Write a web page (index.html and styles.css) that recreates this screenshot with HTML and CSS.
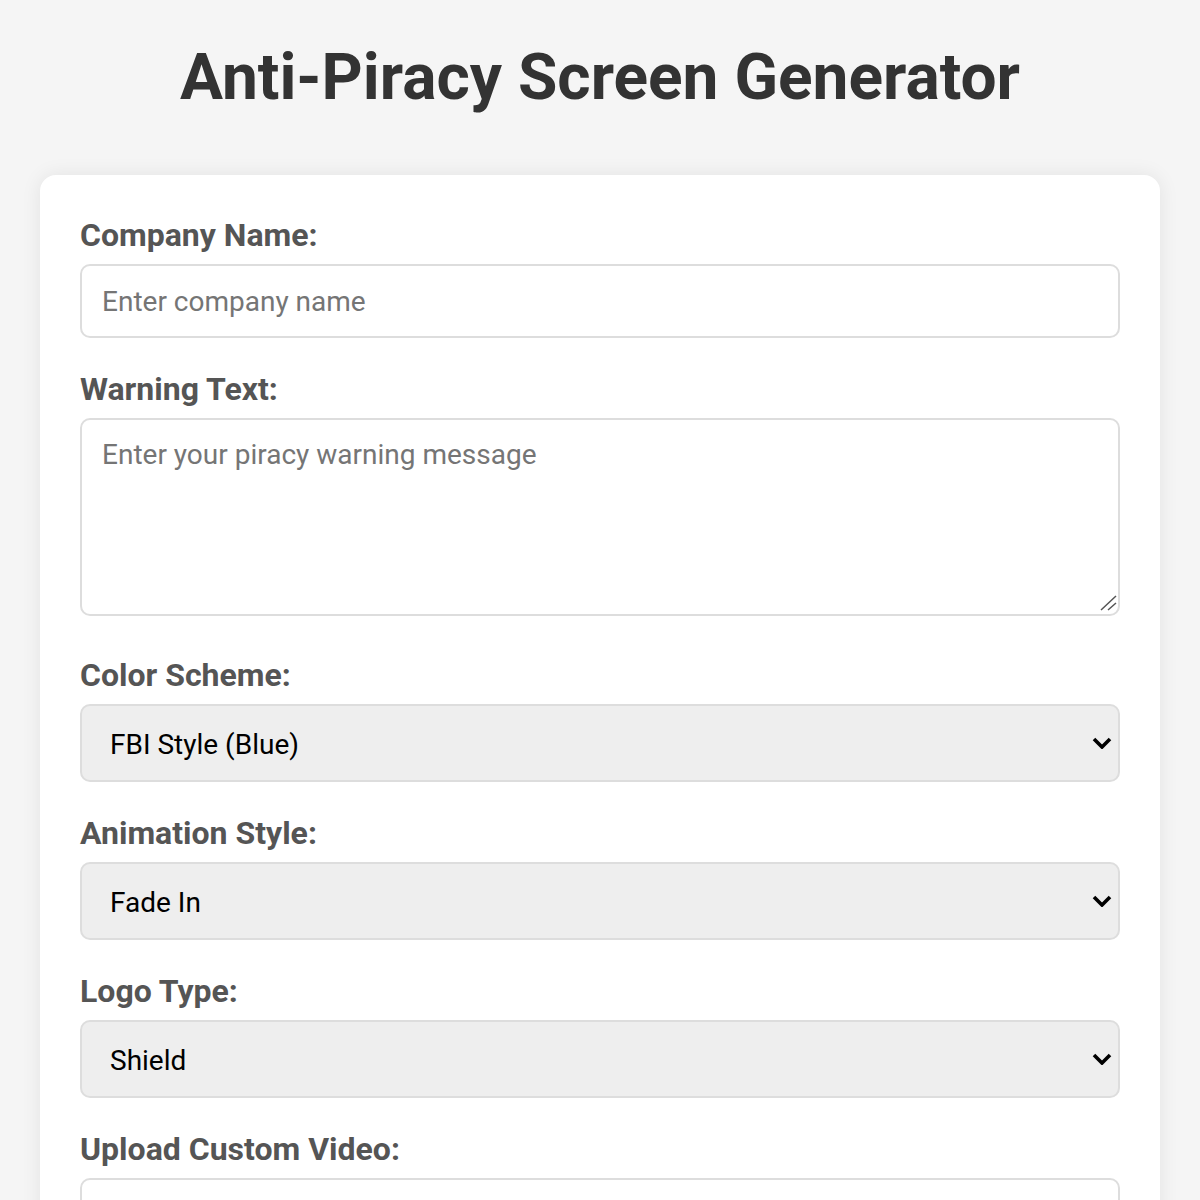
FILE: index.html
```html
<!DOCTYPE html>
<html>
<head>
    <title>Anti-Piracy Screen Generator</title>
    <link rel="stylesheet" href="styles.css">
</head>
<body>
    <h1>Anti-Piracy Screen Generator</h1>

    <div class="container">
        <div class="form-group">
            <label for="companyName">Company Name:</label>
            <input type="text" id="companyName" placeholder="Enter company name">
        </div>

        <div class="form-group form-group-text">
            <label for="warningText">Warning Text:</label>
            <div class="textarea-wrap">
                <textarea id="warningText" placeholder="Enter your piracy warning message"></textarea>
                <svg class="grip" width="20" height="20" viewBox="0 0 20 20"><path d="M3 16 L18 2 M10 16 L18 9" stroke="#555" stroke-width="1.5" fill="none"/></svg>
            </div>
        </div>

        <div class="form-group">
            <label for="colorScheme">Color Scheme:</label>
            <div class="select-wrap">
                <select id="colorScheme">
                    <option>FBI Style (Blue)</option>
                    <option>Interpol (Red)</option>
                    <option>Classic (Black)</option>
                </select>
                <svg class="chevron" width="20" height="12" viewBox="0 0 20 12"><polyline points="2,2 10,10 18,2" fill="none" stroke="#000" stroke-width="3.6"/></svg>
            </div>
        </div>

        <div class="form-group">
            <label for="animationStyle">Animation Style:</label>
            <div class="select-wrap">
                <select id="animationStyle">
                    <option>Fade In</option>
                    <option>Slide Up</option>
                    <option>Flash</option>
                </select>
                <svg class="chevron" width="20" height="12" viewBox="0 0 20 12"><polyline points="2,2 10,10 18,2" fill="none" stroke="#000" stroke-width="3.6"/></svg>
            </div>
        </div>

        <div class="form-group">
            <label for="logoType">Logo Type:</label>
            <div class="select-wrap">
                <select id="logoType">
                    <option>Shield</option>
                    <option>Badge</option>
                    <option>None</option>
                </select>
                <svg class="chevron" width="20" height="12" viewBox="0 0 20 12"><polyline points="2,2 10,10 18,2" fill="none" stroke="#000" stroke-width="3.6"/></svg>
            </div>
        </div>

        <div class="form-group">
            <label for="customVideo">Upload Custom Video:</label>
            <input type="file" id="customVideo" class="file-input" accept="video/*">
        </div>
    </div>
</body>
</html>
```

FILE: styles.css
```css
body {
    font-family: Roboto, "Liberation Sans", sans-serif;
    background-color: #f5f5f5;
    margin: 0;
    padding: 40px;
}
h1 {
    color: #333;
    font-size: 64px;
    font-weight: bold;
    text-align: center;
    margin: 0 0 60px;
}
.container {
    background-color: white;
    padding: 40px;
    border-radius: 16px;
    box-shadow: 0 0 20px rgba(0, 0, 0, 0.08);
}
.form-group {
    margin-bottom: 31px;
}
.form-group-text {
    margin-bottom: 39px;
}
label {
    display: block;
    color: #555;
    font-size: 32px;
    font-weight: bold;
    line-height: 41px;
    margin-bottom: 8px;
}
input, textarea, select {
    display: block;
    width: 100%;
    box-sizing: border-box;
    font-family: Roboto, "Liberation Sans", sans-serif;
    font-size: 28px;
    line-height: 34px;
    height: 74px;
    padding: 18px 20px;
    border: 2px solid #ddd;
    border-radius: 10px;
    margin: 0;
}
.textarea-wrap {
    position: relative;
}
textarea {
    height: 198px;
    resize: none;
}
.grip {
    position: absolute;
    right: 2px;
    bottom: 2px;
    pointer-events: none;
}
.select-wrap {
    position: relative;
}
select {
    -webkit-appearance: none;
    appearance: none;
    height: 78px;
    padding: 20px 20px 16px 28px;
    background-color: #eee;
    color: #000;
}
.chevron {
    position: absolute;
    right: 8px;
    top: 33px;
    pointer-events: none;
}
.file-input {
    height: auto;
    padding: 21px 20px;
}
```
